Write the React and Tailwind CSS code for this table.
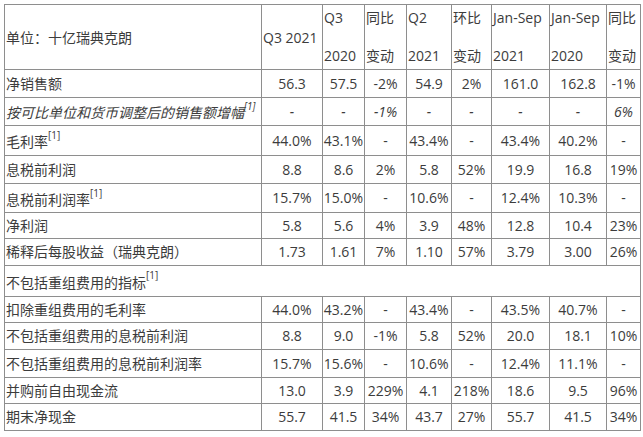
const cols = [257, 61, 42, 42, 45, 40, 58, 57, 34];

const rows = [
    { h: "h-[28px]", label: "净销售额", vals: ["56.3", "57.5", "-2%", "54.9", "2%", "161.0", "162.8", "-1%"] },
    {
        h: "h-[28px]",
        label: "按可比单位和货币调整后的销售额增幅",
        sup: true,
        italic: true,
        vals: ["-", "-", "-1%", "-", "-", "-", "-", "6%"],
    },
    { h: "h-[30px]", label: "毛利率", sup: true, vals: ["44.0%", "43.1%", "-", "43.4%", "-", "43.4%", "40.2%", "-"] },
    { h: "h-[28px]", label: "息税前利润", vals: ["8.8", "8.6", "2%", "5.8", "52%", "19.9", "16.8", "19%"] },
    { h: "h-[29px]", label: "息税前利润率", sup: true, vals: ["15.7%", "15.0%", "-", "10.6%", "-", "12.4%", "10.3%", "-"] },
    { h: "h-[26px]", label: "净利润", vals: ["5.8", "5.6", "4%", "3.9", "48%", "12.8", "10.4", "23%"] },
    { h: "h-[27px]", label: "稀释后每股收益（瑞典克朗）", vals: ["1.73", "1.61", "7%", "1.10", "57%", "3.79", "3.00", "26%"] },
    { h: "h-[31px]", label: "不包括重组费用的指标", sup: true, section: true },
    { h: "h-[26px]", label: "扣除重组费用的毛利率", vals: ["44.0%", "43.2%", "-", "43.4%", "-", "43.5%", "40.7%", "-"] },
    { h: "h-[27px]", label: "不包括重组费用的息税前利润", vals: ["8.8", "9.0", "-1%", "5.8", "52%", "20.0", "18.1", "10%"] },
    { h: "h-[28px]", label: "不包括重组费用的息税前利润率", vals: ["15.7%", "15.6%", "-", "10.6%", "-", "12.4%", "11.1%", "-"] },
    { h: "h-[26px]", label: "并购前自由现金流", vals: ["13.0", "3.9", "229%", "4.1", "218%", "18.6", "9.5", "96%"] },
    { h: "h-[27px]", label: "期末净现金", vals: ["55.7", "41.5", "34%", "43.7", "27%", "55.7", "41.5", "34%"] },
];

const heads = [
    ["Q3", "2020"],
    ["同比", "变动"],
    ["Q2", "2021"],
    ["环比", "变动"],
    ["Jan-Sep", "2021"],
    ["Jan-Sep", "2020"],
    ["同比", "变动"],
];

function Sup() {
    return <sup className="text-[10px] align-top relative top-[-2px] leading-none">[1]</sup>;
}

export default function App() {
    return (
        <div className="bg-white w-[643px] h-[437px] pt-[4px] pl-[4px] text-[#3c3c3c] text-[14px] font-['Open_Sans','Noto_Sans_CJK_SC',sans-serif]">
            <table className="table-fixed border-collapse w-[636px]">
                <colgroup>
                    {cols.map((w, i) => (
                        <col key={i} style={{ width: w }} />
                    ))}
                </colgroup>
                <tbody>
                    <tr className="h-[65px]">
                        <td className="border border-[#8e8e8e] px-[1px] align-middle whitespace-nowrap">
                            单位：十亿瑞典克朗
                        </td>
                        <td className="border border-[#8e8e8e] px-[1px] align-middle whitespace-nowrap">
                            Q3 2021
                        </td>
                        {heads.map(([a, b], i) => (
                            <td key={i} className="border border-[#8e8e8e] p-0 align-top">
                                <div className="flex flex-col justify-between h-[64px] py-[3px] px-[1px] leading-[20px] whitespace-nowrap">
                                    <span>{a}</span>
                                    <span>{b}</span>
                                </div>
                            </td>
                        ))}
                    </tr>
                    {rows.map((r, i) =>
                        r.section ? (
                            <tr key={i} className={r.h}>
                                <td
                                    colSpan={9}
                                    className="border border-[#8e8e8e] px-[1px] pt-[3px] align-middle whitespace-nowrap"
                                >
                                    {r.label}
                                    <Sup />
                                </td>
                            </tr>
                        ) : (
                            <tr key={i} className={r.h}>
                                <td
                                    className={`border border-[#8e8e8e] px-[1px] py-0 align-middle whitespace-nowrap leading-[20px] ${
                                        r.italic ? "italic" : ""
                                    } ${r.sup ? "pt-[3px]" : ""}`}
                                >
                                    {r.label}
                                    {r.sup && <Sup />}
                                </td>
                                {r.vals.map((v, j) => (
                                    <td
                                        key={j}
                                        className={`border border-[#8e8e8e] p-0 text-center align-middle whitespace-nowrap leading-[20px] ${
                                            r.italic ? "italic" : ""
                                        }`}
                                    >
                                        {v}
                                    </td>
                                ))}
                            </tr>
                        )
                    )}
                </tbody>
            </table>
        </div>
    );
}
